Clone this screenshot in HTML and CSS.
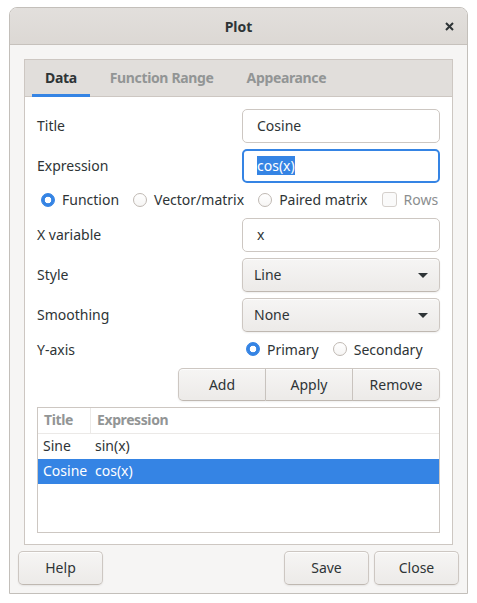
FILE: index.html
```html
<!DOCTYPE html>
<html>
<head>
<meta charset="utf-8">
<link rel="stylesheet" href="styles.css">
</head>
<body>
<div class="window">
  <div class="titlebar">
    <span></span>
    <span class="title">Plot</span>
    <span class="close"><svg width="9" height="9" viewBox="0 0 9 9"><path d="M1 1 L8 8 M8 1 L1 8" stroke="#2e3436" stroke-width="2" stroke-linecap="butt"/></svg></span>
  </div>
  <div class="dialog-body">
    <div class="notebook">
      <div class="tabs">
        <div class="tab active">Data</div>
        <div class="tab">Function Range</div>
        <div class="tab">Appearance</div>
      </div>
      <div class="page">
        <div class="form-row">
          <span class="label">Title</span>
          <div class="entry">Cosine</div>
        </div>
        <div class="form-row">
          <span class="label">Expression</span>
          <div class="entry focused"><span class="selection">cos(x)</span></div>
        </div>
        <div class="radio-row">
          <span class="option"><span class="radio checked"></span>Function</span>
          <span class="option"><span class="radio"></span>Vector/matrix</span>
          <span class="option"><span class="radio"></span>Paired matrix</span>
          <span class="option disabled"><span class="check"></span>Rows</span>
        </div>
        <div class="form-row">
          <span class="label">X variable</span>
          <div class="entry">x</div>
        </div>
        <div class="form-row">
          <span class="label">Style</span>
          <div class="combo button">Line<span class="arrow"></span></div>
        </div>
        <div class="form-row">
          <span class="label">Smoothing</span>
          <div class="combo button">None<span class="arrow"></span></div>
        </div>
        <div class="form-row short">
          <span class="label">Y-axis</span>
          <div class="axis-options">
            <span class="option"><span class="radio checked"></span>Primary</span>
            <span class="option"><span class="radio"></span>Secondary</span>
          </div>
        </div>
        <div class="group-row">
          <div class="btn-group">
            <div class="button">Add</div>
            <div class="button">Apply</div>
            <div class="button">Remove</div>
          </div>
        </div>
        <div class="tree">
          <div class="tree-row header">
            <span class="cell c1">Title</span>
            <span class="cell c2">Expression</span>
          </div>
          <div class="tree-row">
            <span class="cell c1">Sine</span>
            <span class="cell c2">sin(x)</span>
          </div>
          <div class="tree-row selected">
            <span class="cell c1">Cosine</span>
            <span class="cell c2">cos(x)</span>
          </div>
        </div>
      </div>
    </div>
    <div class="action-bar">
      <div class="button action help">Help</div>
      <div class="button action">Save</div>
      <div class="button action">Close</div>
    </div>
  </div>
</div>
</body>
</html>
```

FILE: styles.css
```css
* { box-sizing: border-box; }
html, body { margin: 0; padding: 0; background: #ffffff; }
body {
  padding: 7px 0 0 9px;
  font-family: "Noto Sans", "DejaVu Sans", sans-serif;
  font-size: 14px;
  color: #2e3436;
}
.window {
  width: 459px;
  height: 587px;
  border: 1px solid #c3bfba;
  border-radius: 8px 8px 0 0;
  background: #f6f5f4;
  display: flex;
  flex-direction: column;
  overflow: hidden;
}
.titlebar {
  height: 37px;
  flex: none;
  border-bottom: 1px solid #c6c1bc;
  background: linear-gradient(to bottom, #e2dfdc, #dcd8d4);
  display: grid;
  grid-template-columns: 1fr auto 1fr;
  align-items: center;
  padding-top: 1px;
}
.title { font-weight: 700; font-size: 14px; }
.close { justify-self: end; margin-right: 13px; display: flex; }
.dialog-body {
  flex: 1;
  display: flex;
  flex-direction: column;
  padding: 14px 14px 0;
}
.notebook {
  height: 486px;
  border: 1px solid #cdc7c2;
  background: #ffffff;
  display: flex;
  flex-direction: column;
}
.tabs {
  height: 37px;
  flex: none;
  display: flex;
  padding-left: 7px;
  background: #e1dedb;
  border-bottom: 1px solid #cdc7c2;
}
.tab {
  height: 37px;
  margin-bottom: -1px;
  padding: 0 13px;
  margin-right: 7px;
  display: flex;
  align-items: center;
  font-weight: 700;
  letter-spacing: -0.35px;
  color: #929595;
  border-bottom: 3px solid transparent;
  padding-top: 1px;
}
.tab.active { color: #2e3436; border-bottom-color: #3584e4; }
.page {
  flex: 1;
  display: flex;
  flex-direction: column;
  gap: 6px;
  padding: 12px 12px 11px;
}
.form-row {
  display: grid;
  grid-template-columns: 1fr 198px;
  align-items: center;
  height: 34px;
}
.label { padding-bottom: 2px; }
.form-row.short { height: 24px; }
.entry {
  height: 34px;
  border: 1px solid #cdc7c2;
  border-radius: 5px;
  background: #ffffff;
  display: flex;
  align-items: center;
  padding-left: 14px;
  padding-bottom: 1px;
}
.entry.focused {
  border: 2px solid #3584e4;
  padding-left: 13px;
}
.selection {
  background: #3584e4;
  color: #ffffff;
  line-height: 19px;
}
.button {
  display: flex;
  align-items: center;
  justify-content: center;
  height: 34px;
  border: 1px solid #cdc7c2;
  border-bottom-color: #bfb8b1;
  border-radius: 5px;
  background: linear-gradient(to top, #edebe9 2px, #f6f5f4);
  box-shadow: inset 0 1px rgba(255,255,255,0.8), 0 1px 2px rgba(0,0,0,0.07);
  padding-bottom: 1px;
}
.combo {
  justify-content: space-between;
  padding: 0 11px 1px 11px;
}
.arrow {
  width: 0; height: 0;
  border-left: 5px solid transparent;
  border-right: 5px solid transparent;
  border-top: 5px solid #2e3436;
  margin-top: 2px;
}
.radio-row {
  height: 23px;
  display: flex;
  align-items: center;
  padding-left: 4px;
  padding-bottom: 2px;
  gap: 14px;
}
.option { display: flex; align-items: center; gap: 7px; }
.option.disabled { color: #8b8e8f; }
.radio {
  width: 14px; height: 14px;
  border-radius: 50%;
  border: 1px solid #c0b9b3;
  background: linear-gradient(to bottom, #ffffff, #f6f5f4);
  flex: none;
}
.radio.checked {
  border-color: #3584e4;
  background: radial-gradient(circle, #ffffff 3px, #3584e4 3.6px);
}
.check {
  width: 15px; height: 15px;
  border-radius: 3px;
  border: 1px solid #d5d0cc;
  background: #fafafa;
  flex: none;
}
.axis-options {
  display: flex;
  align-items: center;
  gap: 14px;
  padding-left: 4px;
  padding-bottom: 2px;
}
.group-row {
  display: flex;
  justify-content: flex-end;
  height: 33px;
}
.btn-group { display: flex; }
.btn-group .button {
  width: 87px;
  height: 33px;
  border-radius: 0;
  border-left-width: 0;
}
.btn-group .button:first-child { border-radius: 5px 0 0 5px; border-left-width: 1px; width: 88px; }
.btn-group .button:last-child { border-radius: 0 5px 5px 0; }
.tree {
  flex: 1;
  border: 1px solid #cdc7c2;
  background: #ffffff;
}
.tree-row {
  display: grid;
  grid-template-columns: 53px 1fr;
  height: 25px;
  align-items: center;
  padding-bottom: 2px;
}
.tree-row.header {
  color: #929595;
  font-weight: 700;
  letter-spacing: -0.4px;
  border-bottom: 1px solid #ebe9e7;
  height: 26px;
  padding-bottom: 0;
}
.tree-row.header .c1 { border-right: 1px solid #ebe9e7; height: 100%; display: flex; align-items: center; padding-left: 6px; padding-bottom: 2px; }
.tree-row.header .c2 { padding-left: 6px; padding-bottom: 2px; }
.cell { padding-left: 5px; white-space: nowrap; }
.c2 { padding-left: 4px; }
.tree-row.selected { background: #3584e4; color: #ffffff; }
.action-bar {
  display: flex;
  gap: 5px;
  margin: 6px -6px 0;
}
.action { width: 85px; }
.help { margin-right: auto; }
```
